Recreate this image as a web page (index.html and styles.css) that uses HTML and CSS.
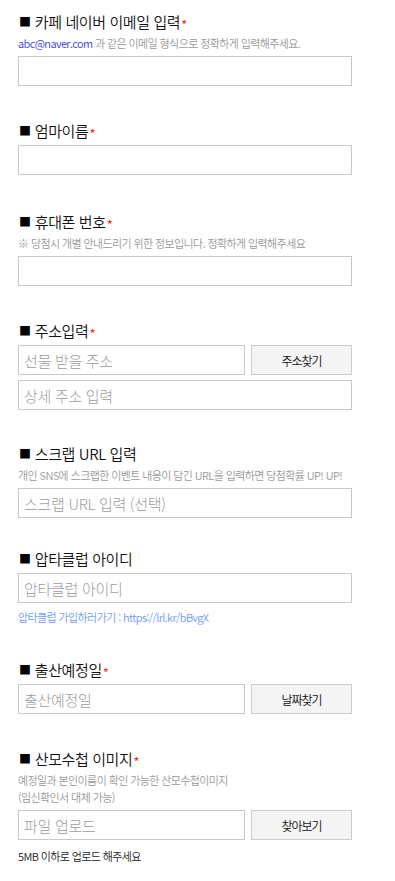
FILE: index.html
```html
<!DOCTYPE html>
<html lang="ko">
<head>
<meta charset="utf-8">
<title>이벤트 신청</title>
<link rel="stylesheet" href="styles.css">
</head>
<body>
<form class="form">
  <section class="field">
    <h2 class="label"><span class="sq">■</span> 카페 네이버 이메일 입력<span class="req">*</span></h2>
    <p class="hint"><span class="blue">abc@naver.com</span> 과 같은 이메일 형식으로 정확하게 입력해주세요.</p>
    <input class="input" type="text">
  </section>

  <section class="field">
    <h2 class="label"><span class="sq">■</span> 엄마이름<span class="req">*</span></h2>
    <input class="input" type="text">
  </section>

  <section class="field field-phone">
    <h2 class="label"><span class="sq">■</span> 휴대폰 번호<span class="req">*</span></h2>
    <p class="hint">※ 당첨시 개별 안내드리기 위한 정보입니다. 정확하게 입력해주세요</p>
    <input class="input" type="text">
  </section>

  <section class="field">
    <h2 class="label"><span class="sq">■</span> 주소입력<span class="req">*</span></h2>
    <div class="stack">
      <div class="row">
        <input class="input short" type="text" placeholder="선물 받을 주소">
        <button class="btn" type="button">주소찾기</button>
      </div>
      <input class="input" type="text" placeholder="상세 주소 입력">
    </div>
  </section>

  <section class="field field-scrap">
    <h2 class="label"><span class="sq">■</span> 스크랩 URL 입력</h2>
    <p class="hint">개인 SNS에 스크랩한 이벤트 내용이 담긴 URL을 입력하면 당첨확률 UP! UP!</p>
    <input class="input" type="text" placeholder="스크랩 URL 입력 (선택)">
  </section>

  <section class="field field-club">
    <h2 class="label"><span class="sq">■</span> 압타클럽 아이디</h2>
    <input class="input" type="text" placeholder="압타클럽 아이디">
    <p class="note link">압타클럽 가입하러가기 : https://lrl.kr/bBvgX</p>
  </section>

  <section class="field">
    <h2 class="label"><span class="sq">■</span> 출산예정일<span class="req">*</span></h2>
    <div class="row">
      <input class="input short" type="text" placeholder="출산예정일">
      <button class="btn" type="button">날짜찾기</button>
    </div>
  </section>

  <section class="field">
    <h2 class="label"><span class="sq">■</span> 산모수첩 이미지<span class="req">*</span></h2>
    <p class="hint">예정일과 본인이름이 확인 가능한 산모수첩이미지<br>(임신확인서 대체 가능)</p>
    <div class="row">
      <input class="input short" type="text" placeholder="파일 업로드">
      <button class="btn" type="button">찾아보기</button>
    </div>
    <p class="note dark">5MB 이하로 업로드 해주세요</p>
  </section>
</form>
</body>
</html>
```

FILE: styles.css
```css
html, body {
  margin: 0;
  padding: 0;
  background: #ffffff;
}

body {
  font-family: "Noto Sans CJK KR", "Noto Sans", sans-serif;
  color: #111111;
}

.form {
  width: 334px;
  padding: 12px 0 20px 18px;
}

.field + .field {
  margin-top: 35px;
}

.field + .field-phone {
  margin-top: 37px;
}

.field + .field-scrap {
  margin-top: 34px;
}

.field + .field-club {
  margin-top: 31px;
}

.label {
  margin: 0;
  height: 20px;
  font-size: 15px;
  font-weight: 350;
  line-height: 20px;
  letter-spacing: -0.4px;
  color: #111111;
  white-space: nowrap;
}

.sq {
  display: inline-block;
  font-size: 12px;
  line-height: 1;
  letter-spacing: 0;
  color: #000000;
  vertical-align: 1px;
  margin-left: 1px;
}

.req {
  color: #ff2a2a;
  font-size: 13px;
  font-weight: 400;
  line-height: 1;
  letter-spacing: 0;
  margin-left: 1px;
  position: relative;
  top: 2px;
}

.hint {
  margin: 3px 0 0;
  font-size: 11px;
  font-weight: 350;
  line-height: 17px;
  letter-spacing: -0.6px;
  color: #999999;
}

.blue {
  color: #3a3af0;
}

.label + .input,
.label + .stack,
.label + .row,
.hint + .input,
.hint + .row {
  margin-top: 4px;
}

.input {
  display: block;
  box-sizing: border-box;
  width: 100%;
  height: 30px;
  margin: 0;
  padding: 0 5px;
  border: 1px solid #c8c8c8;
  border-radius: 0;
  background: #ffffff;
  font-family: "Noto Sans CJK KR", sans-serif;
  font-size: 15px;
  font-weight: 300;
  letter-spacing: -0.3px;
  color: #333333;
  outline: none;
}

.input::placeholder {
  color: #9c9c9c;
}

.stack {
  display: flex;
  flex-direction: column;
  gap: 5px;
}

.row {
  display: flex;
  gap: 6px;
}

.input.short {
  width: 227px;
  flex: none;
}

.btn {
  box-sizing: border-box;
  width: 101px;
  height: 30px;
  flex: none;
  margin: 0;
  padding: 0;
  border: 1px solid #cccccc;
  border-radius: 0;
  background: #f4f4f4;
  font-family: "Noto Sans CJK KR", sans-serif;
  font-size: 12px;
  font-weight: 350;
  letter-spacing: -1px;
  color: #111111;
}

.note {
  margin: 6px 0 0;
  height: 16px;
  font-size: 11px;
  font-weight: 350;
  line-height: 16px;
  letter-spacing: -0.6px;
}

.link {
  color: #6f9bff;
}

.dark {
  margin-top: 8px;
  color: #222222;
}
```
